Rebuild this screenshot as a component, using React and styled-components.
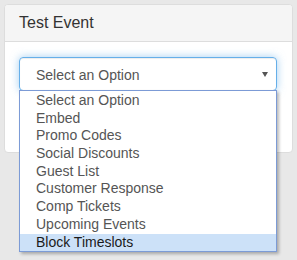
import React from "react";
import styled, { createGlobalStyle } from "styled-components";

const GlobalStyle = createGlobalStyle`
  html, body {
    margin: 0;
    padding: 0;
    background: #e8e8e8;
    font-family: "Liberation Sans", Arial, sans-serif;
  }
`;

const Page = styled.div`
  padding: 4px;
  width: 297px;
  height: 260px;
  box-sizing: border-box;
`;

const Panel = styled.div`
  width: 289px;
  box-sizing: border-box;
  background: #fff;
  border: 1px solid #dddddd;
  border-radius: 4px;
`;

const Heading = styled.div`
  background: #f5f5f5;
  border-bottom: 1px solid #dddddd;
  border-radius: 3px 3px 0 0;
  padding: 10px 14px;
  height: 16px;
`;

const Title = styled.h3`
  margin: 0;
  font-size: 16px;
  line-height: 16px;
  font-weight: normal;
  color: #333;
`;

const Body = styled.div`
  padding: 15px 15px 0 14px;
  height: 110px;
  box-sizing: border-box;
`;

const SelectWrap = styled.div`
  position: relative;
  width: 258px;
`;

const SelectBox = styled.div`
  height: 34px;
  box-sizing: border-box;
  display: flex;
  align-items: center;
  justify-content: space-between;
  padding: 1px 8px 0 16px;
  border: 1px solid #66afe9;
  border-radius: 4px;
  box-shadow: inset 0 1px 1px rgba(0, 0, 0, 0.075),
    0 0 8px rgba(102, 175, 233, 0.6);
  font-size: 14px;
  color: #555;
`;

const Menu = styled.ul`
  position: absolute;
  top: 33px;
  left: 0;
  width: 258px;
  box-sizing: border-box;
  margin: 0;
  padding: 1px 0 0;
  list-style: none;
  background: #fff;
  border: 1px solid #7c9bd6;
  box-shadow: 2px 2px 3px rgba(0, 0, 0, 0.28);
`;

const Item = styled.li`
  height: 17.7px;
  line-height: 17.7px;
  padding-left: 16px;
  font-size: 14px;
  color: ${(p) => (p.$active ? "#1a1a1a" : "#555")};
  background: ${(p) => (p.$active ? "#cce1f8" : "transparent")};
  white-space: nowrap;
`;

const options = [
  "Select an Option",
  "Embed",
  "Promo Codes",
  "Social Discounts",
  "Guest List",
  "Customer Response",
  "Comp Tickets",
  "Upcoming Events",
  "Block Timeslots",
];

export default function App() {
  return (
    <>
      <GlobalStyle />
      <Page>
        <Panel>
          <Heading>
            <Title>Test Event</Title>
          </Heading>
          <Body>
            <SelectWrap>
              <SelectBox>
                <span>Select an Option</span>
                <svg width="6" height="5" viewBox="0 0 6 5">
                  <path d="M0 0 H6 L3 5 Z" fill="#555" />
                </svg>
              </SelectBox>
              <Menu>
                {options.map((o, i) => (
                  <Item key={o} $active={i === options.length - 1}>
                    {o}
                  </Item>
                ))}
              </Menu>
            </SelectWrap>
          </Body>
        </Panel>
      </Page>
    </>
  );
}
